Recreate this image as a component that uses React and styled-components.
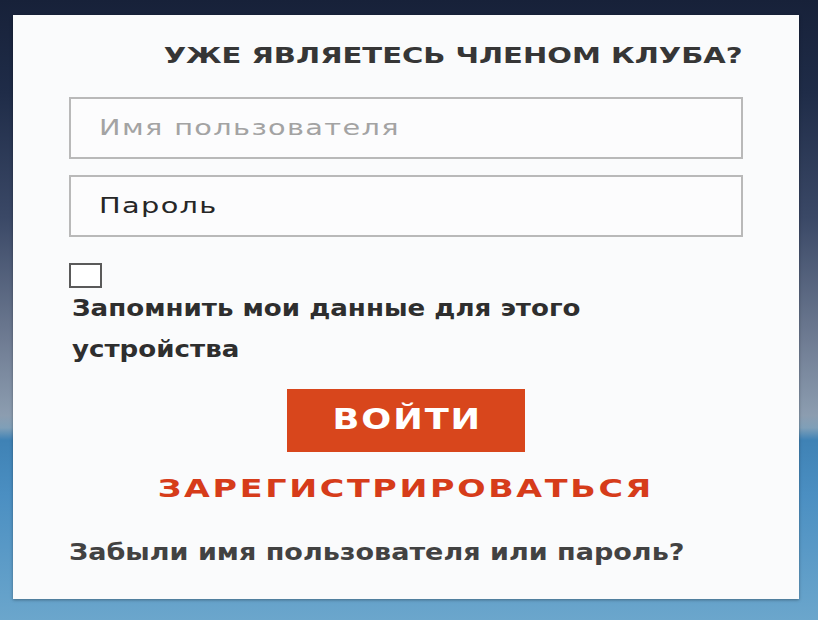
import styled, { createGlobalStyle } from 'styled-components';

const GlobalStyle = createGlobalStyle`
  html, body {
    margin: 0;
    padding: 0;
  }
  body {
    width: 818px;
    height: 620px;
    overflow: hidden;
    background: linear-gradient(
      180deg,
      #172139 0%,
      #1f2c48 15%,
      #3a4866 35%,
      #6f7c93 55%,
      #8c9db0 67%,
      #7f9fb8 69%,
      #3f82b5 71%,
      #4b8fc2 80%,
      #6ba6cc 100%
    );
    font-family: "DejaVu Sans", "Liberation Sans", sans-serif;
  }
`;

const Page = styled.div`
  width: 818px;
  height: 620px;
  padding: 15px 19px 21px 13px;
  box-sizing: border-box;
`;

const Card = styled.div`
  height: 100%;
  background: #fafbfc;
  box-shadow: 0 1px 3px rgba(0, 0, 0, 0.35);
  padding: 0 56px;
  box-sizing: border-box;
  display: flex;
  flex-direction: column;
`;

// the lettering on this form is a wide face, so glyphs get stretched sideways
const Wide = styled.span`
  display: inline-block;
  white-space: nowrap;
  transform: scaleX(${(p) => p.$x});
  transform-origin: ${(p) => p.$origin || 'left'} center;
`;

const Heading = styled.h2`
  margin: 0;
  height: 82px;
  display: flex;
  align-items: center;
  justify-content: flex-end;
  padding-bottom: 2px;
  box-sizing: border-box;
  font-size: 22px;
  font-weight: 700;
  color: #363636;
  text-transform: uppercase;
`;

const Field = styled.div`
  height: 62px;
  border: 2px solid #b9b9b9;
  background: #fcfcfd;
  box-sizing: border-box;
  display: flex;
  align-items: center;
  padding-left: 28px;
  margin-top: ${(p) => p.$gap || 0}px;
  font-size: 21px;
  letter-spacing: 1px;
  color: ${(p) => (p.$filled ? '#262626' : '#a3a3a3')};
`;

const Check = styled.div`
  width: 33px;
  height: 25px;
  border: 2px solid #5a5a5a;
  box-sizing: border-box;
  background: #fff;
  margin-top: 26px;
`;

const Remember = styled.div`
  margin: 0 0 0 3px;
  width: 480px;
  font-size: 23px;
  font-weight: 700;
  line-height: 41px;
  color: #2e2e2e;
  transform: scaleX(1.135);
  transform-origin: left top;
`;

const LoginButton = styled.button`
  align-self: center;
  margin-top: 19px;
  width: 238px;
  height: 63px;
  border: none;
  background: #d8461c;
  color: #fff;
  font-family: "DejaVu Sans", sans-serif;
  font-size: 28px;
  font-weight: 700;
  letter-spacing: 1.5px;
  padding: 0 0 2px 2px;
`;

const Register = styled.a`
  align-self: center;
  margin-top: 17px;
  line-height: 40px;
  font-size: 25px;
  font-weight: 700;
  color: #d63c1a;
  letter-spacing: 2px;
  text-decoration: none;
`;

const Forgot = styled.a`
  margin-top: 23px;
  line-height: 40px;
  font-size: 23px;
  font-weight: 700;
  color: #424242;
  text-decoration: none;
`;

export default function App() {
  return (
    <>
      <GlobalStyle />
      <Page>
        <Card>
          <Heading>
            <Wide $x={1.32} $origin="right">Уже являетесь членом клуба?</Wide>
          </Heading>
          <Field>
            <Wide $x={1.37}>Имя пользователя</Wide>
          </Field>
          <Field $gap={16} $filled>
            <Wide $x={1.37}>Пароль</Wide>
          </Field>
          <Check />
          <Remember>Запомнить мои данные для этого устройства</Remember>
          <LoginButton>
            <Wide $x={1.26} $origin="center">ВОЙТИ</Wide>
          </LoginButton>
          <Register>
            <Wide $x={1.335} $origin="center">ЗАРЕГИСТРИРОВАТЬСЯ</Wide>
          </Register>
          <Forgot>
            <Wide $x={1.175}>Забыли имя пользователя или пароль?</Wide>
          </Forgot>
        </Card>
      </Page>
    </>
  );
}
